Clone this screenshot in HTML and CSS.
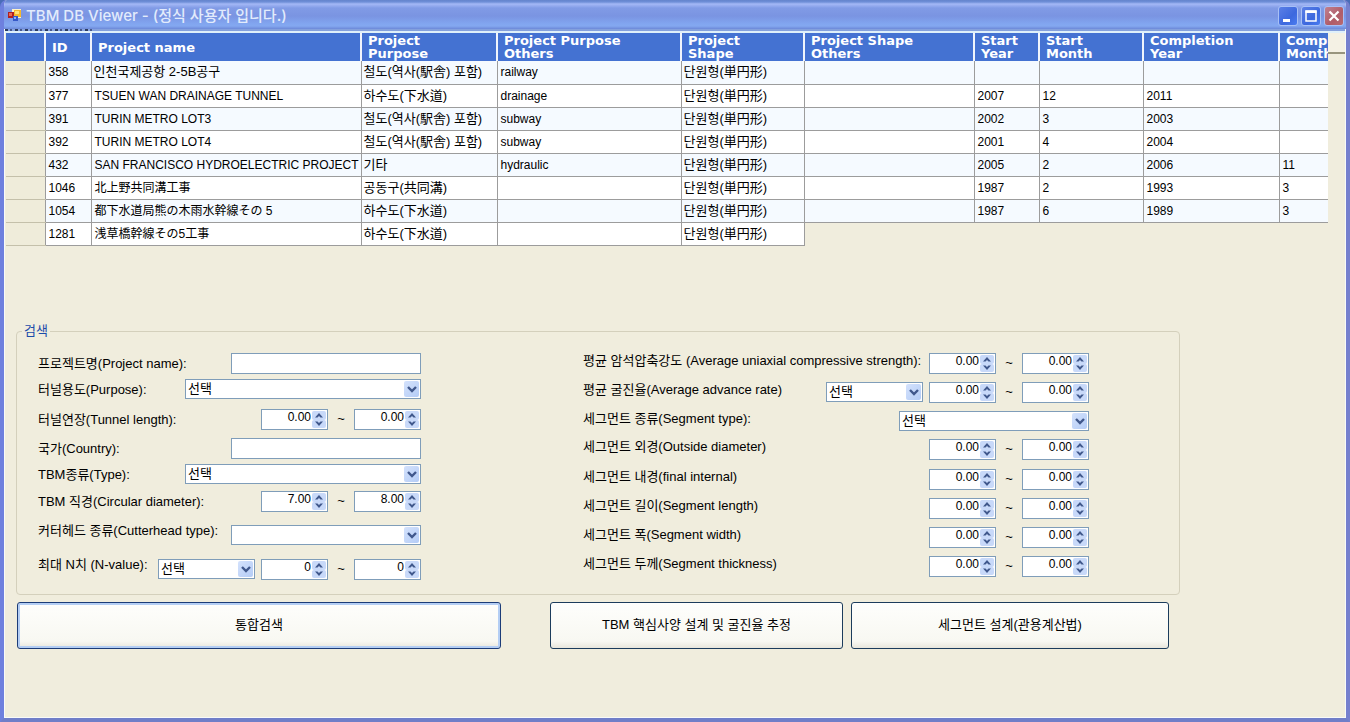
FILE: index.html
```html
<!DOCTYPE html>
<html lang="ko">
<head>
<meta charset="utf-8">
<title>TBM DB Viewer</title>
<link rel="stylesheet" href="styles.css">
</head>
<body>
<div class="window">
  <header class="titlebar">
    <svg class="app-icon" width="14" height="13" viewBox="0 0 14 13" aria-hidden="true">
      <rect x="4" y="0" width="9" height="9" fill="#fff3c8"/>
      <rect x="6" y="1" width="7" height="7" fill="#f5b82e"/>
      <rect x="7" y="2" width="4" height="3" fill="#ffe27a"/>
      <rect x="0" y="3" width="6" height="6" fill="#b02020"/>
      <rect x="1" y="4" width="3" height="3" fill="#e86a50"/>
      <rect x="5" y="7" width="5" height="5" fill="#3558c8"/>
      <rect x="6" y="8" width="2" height="2" fill="#8fb0ff"/>
    </svg>
    <h1 class="title">TBM DB Viewer - (정식 사용자 입니다.)</h1>
    <div class="caption-buttons">
      <button class="caption" type="button" aria-label="Minimize">
        <svg width="18" height="18" viewBox="0 0 18 18"><rect x="4" y="12" width="7" height="3" fill="#fff"/></svg>
      </button>
      <button class="caption" type="button" aria-label="Maximize">
        <svg width="18" height="18" viewBox="0 0 18 18"><path d="M4 4h10v10H4z" fill="none" stroke="#fff" stroke-width="1.500"/><path d="M3.500 3.500h11v2.500h-11z" fill="#fff"/></svg>
      </button>
      <button class="caption close" type="button" aria-label="Close">
        <svg width="18" height="18" viewBox="0 0 18 18"><path d="M4.500 4.500l9 9M13.500 4.500l-9 9" stroke="#fff" stroke-width="2.200"/></svg>
      </button>
    </div>
  </header>
  <main class="client">
    <div class="menu-edge"></div>
    <div class="grid-area">
      <div class="grid-view">
        <table class="grid">
          <colgroup>
            <col class="c-head"><col class="c-id"><col class="c-name"><col class="c-purpose"><col class="c-purpose2"><col class="c-shape"><col class="c-shape2"><col class="c-year"><col class="c-month"><col class="c-cyear"><col class="c-cmonth">
          </colgroup>
          <thead>
            <tr><th></th><th>ID</th><th>Project name</th><th>Project<br>Purpose</th><th>Project Purpose<br>Others</th><th>Project<br>Shape</th><th>Project Shape<br>Others</th><th>Start<br>Year</th><th>Start<br>Month</th><th>Completion<br>Year</th><th>Completion<br>Month</th></tr>
          </thead>
          <tbody>
            <tr><th></th><td>358</td><td class="ko">인천국제공항 2-5B공구</td><td class="ko">철도(역사(駅舎) 포함)</td><td>railway</td><td class="ko">단원형(単円形)</td><td></td><td></td><td></td><td></td><td></td></tr>
            <tr><th></th><td>377</td><td>TSUEN WAN DRAINAGE TUNNEL</td><td class="ko">하수도(下水道)</td><td>drainage</td><td class="ko">단원형(単円形)</td><td></td><td>2007</td><td>12</td><td>2011</td><td></td></tr>
            <tr><th></th><td>391</td><td>TURIN METRO LOT3</td><td class="ko">철도(역사(駅舎) 포함)</td><td>subway</td><td class="ko">단원형(単円形)</td><td></td><td>2002</td><td>3</td><td>2003</td><td></td></tr>
            <tr><th></th><td>392</td><td>TURIN METRO LOT4</td><td class="ko">철도(역사(駅舎) 포함)</td><td>subway</td><td class="ko">단원형(単円形)</td><td></td><td>2001</td><td>4</td><td>2004</td><td></td></tr>
            <tr><th></th><td>432</td><td>SAN FRANCISCO HYDROELECTRIC PROJECT</td><td class="ko">기타</td><td>hydraulic</td><td class="ko">단원형(単円形)</td><td></td><td>2005</td><td>2</td><td>2006</td><td>11</td></tr>
            <tr><th></th><td>1046</td><td lang="ja">北上野共同溝工事</td><td class="ko">공동구(共同溝)</td><td></td><td class="ko">단원형(単円形)</td><td></td><td>1987</td><td>2</td><td>1993</td><td>3</td></tr>
            <tr><th></th><td>1054</td><td lang="ja">都下水道局熊の木雨水幹線その 5</td><td class="ko">하수도(下水道)</td><td></td><td class="ko">단원형(単円形)</td><td></td><td>1987</td><td>6</td><td>1989</td><td>3</td></tr>
            <tr><th></th><td>1281</td><td lang="ja">浅草橋幹線その5工事</td><td class="ko">하수도(下水道)</td><td></td><td class="ko">단원형(単円形)</td></tr>
          </tbody>
        </table>
      </div>
      <div class="grid-side"></div>
    </div>

    <form class="search-form">
      <fieldset class="search">
        <legend>검색</legend>
        <div class="columns">
          <div class="fields left" id="left"></div>
          <div class="fields right" id="right"></div>
        </div>
      </fieldset>
      <div class="actions">
        <button class="action default" type="button">통합검색</button>
        <button class="action design" type="button">TBM 핵심사양 설계 및 굴진율 추정</button>
        <button class="action segment" type="button">세그먼트 설계(관용계산법)</button>
      </div>
    </form>
  </main>
</div>
<script src="form.js"></script>
</body>
</html>
```
FILE: form.js
```javascript
const leftFields = [
  { id: 'name', label: '프로젝트명(Project name):', text: true },
  { id: 'purpose', label: '터널용도(Purpose):', select: 'wide', option: '선택' },
  { id: 'length', label: '터널연장(Tunnel length):', range: ['0.00', '0.00'] },
  { id: 'country', label: '국가(Country):', text: true },
  { id: 'type', label: 'TBM종류(Type):', select: 'wide', option: '선택' },
  { id: 'diameter', label: 'TBM 직경(Circular diameter):', range: ['7.00', '8.00'] },
  { id: 'cutter', label: '커터헤드 종류(Cutterhead type):', select: 'medium', option: '', raised: true },
  { id: 'nvalue', label: '최대 N치 (N-value):', select: 'small', option: '선택', range: ['0', '0'], raised: true }
];

const rightFields = [
  { id: 'ucs', label: '평균 암석압축강도 (Average uniaxial compressive strength):', range: ['0.00', '0.00'] },
  { id: 'advance', label: '평균 굴진율(Average advance rate)', select: 'small', option: '선택', range: ['0.00', '0.00'] },
  { id: 'segtype', label: '세그먼트 종류(Segment type):', select: 'medium', option: '선택' },
  { id: 'outside', label: '세그먼트 외경(Outside diameter)', range: ['0.00', '0.00'] },
  { id: 'internal', label: '세그먼트 내경(final internal)', range: ['0.00', '0.00'] },
  { id: 'seglength', label: '세그먼트 길이(Segment length)', range: ['0.00', '0.00'] },
  { id: 'segwidth', label: '세그먼트 폭(Segment width)', range: ['0.00', '0.00'] },
  { id: 'thickness', label: '세그먼트 두께(Segment thickness)', range: ['0.00', '0.00'] }
];

function selectHtml(id, size, option) {
  return `<span class="combo ${size}"><select id="${id}"><option>${option}</option></select>` +
    '<span class="arrow"><svg width="10" height="7" viewBox="0 0 10 7"><path d="M1 1l4 4 4-4" fill="none" stroke="#40588c" stroke-width="2.4"/></svg></span></span>';
}

function spinHtml(id, value, name) {
  return `<span class="spin"><input id="${id}" type="text" inputmode="decimal" value="${value}" aria-label="${name}">` +
    '<span class="spin-buttons">' +
    '<button type="button" aria-label="증가"><svg width="8" height="5" viewBox="0 0 8 5"><path d="M0 4.500L4 0l4 4.500H5.500L4 3 2.500 4.500z" fill="#40588c"/></svg></button>' +
    '<button type="button" aria-label="감소"><svg width="8" height="5" viewBox="0 0 8 5"><path d="M0 .5L4 5 8 .5H5.500L4 2 2.500 .5z" fill="#40588c"/></svg></button>' +
    '</span></span>';
}

function fieldHtml(f) {
  const first = f.text || f.select ? f.id : `${f.id}-min`;
  let controls = '';
  if (f.text) controls += `<input class="text" id="${f.id}" type="text">`;
  if (f.select) controls += selectHtml(f.id, f.select, f.option);
  if (f.range) {
    controls += '<span class="range">' + spinHtml(`${f.id}-min`, f.range[0], `${f.label} 최소`) +
      '<span class="tilde">~</span>' + spinHtml(`${f.id}-max`, f.range[1], `${f.label} 최대`) + '</span>';
  }
  return `<div class="field${f.raised ? ' raised' : ''}"><label for="${first}">${f.label}</label><div class="controls">${controls}</div></div>`;
}

document.getElementById('left').innerHTML = leftFields.map(fieldHtml).join('');
document.getElementById('right').innerHTML = rightFields.map(fieldHtml).join('');
```
FILE: styles.css
```css
* { box-sizing: border-box; }

body {
  margin: 0;
  background: #4a6cb8;
  color: #000;
  font: 13px/16px "Liberation Sans", "Noto Sans CJK KR", sans-serif;
}

input, select, button { font: inherit; color: inherit; margin: 0; }

.window {
  display: flex;
  flex-direction: column;
  min-height: 100vh;
  border: solid #6e80de;
  border-width: 0 4px 4px;
  border-right-color: #7580ce;
  border-bottom-color: #707ec8;
  border-radius: 7px 7px 0 0;
  overflow: hidden;
  background: #f0eddd;
}

.titlebar {
  display: flex;
  align-items: center;
  height: 29px;
  margin: 0 -4px;
  padding: 2px 6px 0 8px;
  background: linear-gradient(#6484cc 0, #6f8fd8 2px, #a4b8f6 4px, #819be6 8px, #7a94e2 16px, #82a6f0 24px, #84a8f0 26px, #6c88d8 29px);
}

.title {
  flex: 1;
  margin: 0 0 0 4px;
  color: #e2ebfc;
  font: 500 15px/18px Inter, "Noto Sans CJK KR", sans-serif;
}

.caption-buttons { display: flex; gap: 3px; }

.caption {
  display: block;
  width: 20px;
  height: 20px;
  padding: 0;
  border: 1px solid #a8c0f6;
  border-radius: 3px;
  background: linear-gradient(135deg, #5c80e6, #3c68de 60%, #4a7cf0);
}

.caption svg { display: block; }
.caption.close { background: linear-gradient(135deg, #c08090, #b05c68 60%, #b86a70); }

.client {
  flex: 1;
  display: flex;
  flex-direction: column;
  border: solid #f8faf8;
  border-width: 0 1px 1px;
}

.menu-edge {
  height: 4px;
  border-bottom: 2px solid #dff0fa;
  background: repeating-linear-gradient(90deg, #2c3c60 0 3px, #88a4e0 3px 5px, #45588c 5px 7px, #88a4e0 7px 10px) left top / 88px 2px no-repeat, #84a0dc;
}

.grid-area { display: flex; height: 289px; padding-left: 1px; }
.grid-view { flex: 1; min-width: 0; overflow: hidden; }

.grid-side {
  width: 17px;
  height: 21px;
  border-bottom: 2px solid #98957e;
  background: #f4f1e4;
}

.grid { width: 1370px; table-layout: fixed; border-collapse: collapse; }
.c-head { width: 39px; }
.c-id { width: 46px; }
.c-name { width: 270px; }
.c-purpose, .c-cyear { width: 136px; }
.c-purpose2 { width: 184px; }
.c-shape { width: 123px; }
.c-shape2 { width: 170px; }
.c-year { width: 65px; }
.c-month { width: 104px; }
.c-cmonth { width: 97px; }

.grid thead th {
  height: 28px;
  padding: 0 0 0 6px;
  border-left: 2px solid #f0f4fc;
  background: #4472d2;
  color: #fff;
  text-align: left;
  vertical-align: middle;
  white-space: nowrap;
  font: bold 13px/13px "DejaVu Sans", sans-serif;
}

.grid thead th:first-child { border-left: 0; }

.grid td, .grid tbody th {
  height: 23px;
  padding: 0 0 0 3px;
  border: 1px solid #9c9c9c;
  border-top: 0;
  background: #fff;
  font-size: 12px;
  line-height: 16px;
  white-space: nowrap;
}

.grid tbody tr:nth-child(odd) td { background: #f5faff; }
.grid tbody tr:last-child td { background: #fff; }
.grid tbody th { background: #efecda; border-left: 0; border-bottom-color: #c4c0aa; }
.grid td.ko { padding-left: 2px; font-size: 13px; }
.grid td:lang(ja) { font-family: "Liberation Sans", "Noto Sans CJK JP", sans-serif; }

.search-form { display: flex; flex-direction: column; gap: 7px; padding: 0 11px; }

.search {
  width: 100%;
  max-width: 1164px;
  margin: 0;
  padding: 13px 21px 14px;
  border: 1px solid #d4d0bc;
  border-radius: 4px;
}

.search legend { margin-left: -16px; padding: 0 2px; color: #1c4caa; line-height: 18px; }

.columns {
  display: grid;
  grid-template-columns: minmax(0, 383px) minmax(0, 506px);
  gap: 162px;
}

.fields { display: grid; }
.left { grid-template-rows: 26px 30px 29px 26px 27px 34px 34px 21px; }
.right { grid-template-rows: 29px 29px 28px 30px 29px 29px 29px 21px; }
.field { display: flex; justify-content: space-between; align-items: flex-start; }
.field label { white-space: nowrap; line-height: 21px; }
.right label { line-height: 16px; }
.raised label { line-height: 12px; }

.controls { display: flex; gap: 6px; }

.text, .combo, .spin { border: 1px solid #7f9db9; background: #fff; }
.text { display: block; width: 190px; height: 21px; padding: 0 3px; }

.combo { display: flex; height: 20px; padding: 1px; }
.wide { width: 236px; }
.medium { width: 190px; }
.small { width: 97px; }

.combo select {
  flex: 1;
  min-width: 0;
  padding: 0 1px;
  border: 0;
  appearance: none;
  background: #fff;
  line-height: 14px;
}

.arrow {
  display: flex;
  align-items: center;
  justify-content: center;
  width: 15px;
  border-radius: 2px;
  background: linear-gradient(135deg, #d4e2fc, #b4ccf6);
}

.range { display: flex; }
.spin { display: flex; width: 67px; height: 21px; padding: 1px; }

.spin input {
  flex: 1;
  min-width: 0;
  height: 12px;
  padding: 0 1px 0 0;
  border: 0;
  background: none;
  font-size: 12px;
  line-height: 12px;
  text-align: right;
}

.spin-buttons { display: flex; flex-direction: column; width: 14px; }

.spin button {
  display: flex;
  flex: 1;
  align-items: center;
  justify-content: center;
  padding: 0;
  border: 0;
  border-radius: 2px;
  background: #c8d9f9;
}

.tilde { width: 26px; text-align: center; line-height: 20px; }

.actions { display: flex; padding-left: 1px; }

.action {
  height: 47px;
  padding: 0 0 2px;
  border: 1px solid #1c3c5c;
  border-radius: 3px;
  background: linear-gradient(#fefefc, #f8f8f2 85%, #e8e6dc);
}

.default { width: 484px; border-color: #1c3c78; box-shadow: inset 0 0 0 2px #b4cef4; }
.design { width: 293px; margin-left: 49px; }
.segment { width: 318px; margin-left: 8px; }
```
